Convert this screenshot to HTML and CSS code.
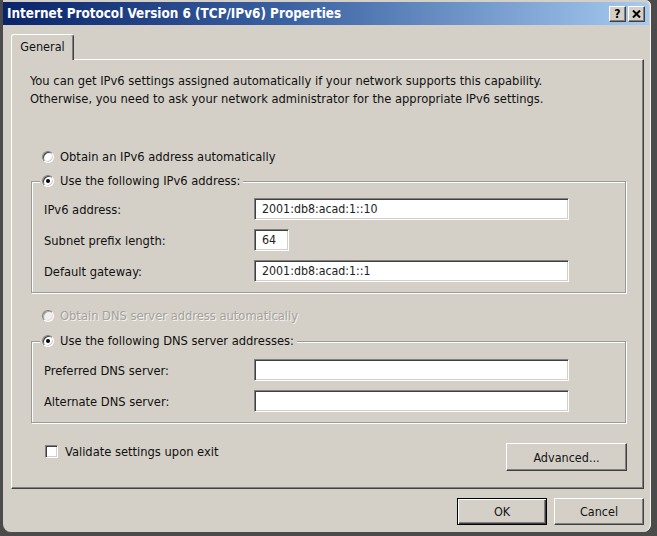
FILE: index.html
```html
<!DOCTYPE html>
<html>
<head>
<meta charset="utf-8">
<link rel="stylesheet" href="styles.css">
</head>
<body>
<div class="window">
  <div class="titlebar">
    <span class="title">Internet Protocol Version 6 (TCP/IPv6) Properties</span>
    <div class="caption-btns">
      <span class="cbtn">?</span>
      <span class="cbtn"><svg width="9" height="8" viewBox="0 0 9 8"><path d="M1 0.5 L8 7.5 M8 0.5 L1 7.5" stroke="#000" stroke-width="2"/></svg></span>
    </div>
  </div>
  <div class="client">
    <div class="tabs"><div class="tab">General</div></div>
    <div class="panel">
      <p class="intro">You can get IPv6 settings assigned automatically if your network supports this capability.<br>Otherwise, you need to ask your network administrator for the appropriate IPv6 settings.</p>
      <div class="radio-row first"><span class="radio"></span><span>Obtain an IPv6 address automatically</span></div>
      <fieldset class="group g1">
        <legend><span class="radio-row in-legend"><span class="radio checked"></span><span>Use the following IPv6 address:</span></span></legend>
        <div class="field"><span class="lbl">IPv6 address:</span><span class="input">2001:db8:acad:1::10</span></div>
        <div class="field"><span class="lbl">Subnet prefix length:</span><span class="input short">64</span></div>
        <div class="field"><span class="lbl">Default gateway:</span><span class="input">2001:db8:acad:1::1</span></div>
      </fieldset>
      <div class="radio-row disabled dns-auto"><span class="radio"></span><span>Obtain DNS server address automatically</span></div>
      <fieldset class="group g2">
        <legend><span class="radio-row in-legend"><span class="radio checked"></span><span>Use the following DNS server addresses:</span></span></legend>
        <div class="field"><span class="lbl">Preferred DNS server:</span><span class="input"></span></div>
        <div class="field"><span class="lbl">Alternate DNS server:</span><span class="input"></span></div>
      </fieldset>
      <div class="bottom-row">
        <div class="check-row"><span class="checkbox"></span><span>Validate settings upon exit</span></div>
        <button class="btn advanced">Advanced...</button>
      </div>
    </div>
    <div class="dialog-buttons">
      <button class="btn default">OK</button>
      <button class="btn">Cancel</button>
    </div>
  </div>
</div>
</body>
</html>
```
FILE: styles.css
```css
* { box-sizing: border-box; }
body {
  margin: 0;
  width: 657px;
  height: 536px;
  overflow: hidden;
  background: #4b4b4b;
  font-family: "DejaVu Sans Condensed", "Liberation Sans", sans-serif;
  font-size: 12.8px;
  color: #111;
}
.window {
  margin-left: 3px;
  width: 648px;
  height: 532px;
  background: #d4d0c8;
  border-radius: 0 6px 8px 8px;
  padding: 2px 2px 0 0;
  box-shadow: inset -1px 0 0 #f2f1ee;
}
.titlebar {
  height: 23px;
  display: flex;
  align-items: center;
  justify-content: space-between;
  padding: 0 4px 0 4px;
  background: linear-gradient(to right, #0a246a 0%, #3c63a3 45%, #a6caf0 100%);
  border-radius: 0 5px 0 0;
}
.title {
  color: #fff;
  font-weight: bold;
  font-size: 13.4px;
}
.caption-btns { display: flex; gap: 2px; }
.cbtn {
  width: 17px;
  height: 16px;
  display: flex;
  align-items: center;
  justify-content: center;
  background: #d4d0c8;
  border: 1px solid;
  border-color: #fff #404040 #404040 #fff;
  box-shadow: inset -1px -1px 0 #808080;
  font-weight: bold;
  font-size: 12px;
  color: #000;
  line-height: 1;
}
.client { padding: 9px 5px 0 8px; }
.tabs { display: flex; position: relative; z-index: 1; }
.tab {
  width: 63px;
  height: 26px;
  margin-bottom: -1px;
  display: flex;
  align-items: center;
  justify-content: center;
  padding-bottom: 2px;
  background: #d4d0c8;
  border: 1px solid;
  border-bottom: none;
  border-color: #fff #404040 transparent #fff;
  border-radius: 3px 3px 0 0;
  box-shadow: inset -1px 0 0 #808080;
  font-size: 12.5px;
}
.panel {
  width: 633px;
  height: 430px;
  border: 1px solid;
  border-color: #fff #404040 #404040 #fff;
  box-shadow: inset -1px -1px 0 #808080;
  padding: 12px 17px 0 19px;
}
.intro {
  margin: 0 0 0 -1px;
  line-height: 18px;
}
.radio-row {
  display: flex;
  align-items: center;
  gap: 6px;
  height: 16px;
  line-height: 16px;
}
.radio-row.first { margin: 41px 0 0 11px; }
.radio-row.dns-auto { margin: 15px 0 0 11px; }
.radio-row.disabled { color: #a5a29c; text-shadow: 1px 1px 0 #f4f3f1; }
.radio {
  width: 12px;
  height: 12px;
  flex: none;
  border-radius: 50%;
  background: #fff;
  border: 1px solid;
  border-color: #808080 #fff #fff #808080;
  box-shadow: inset 1px 1px 0 #404040, inset -1px -1px 0 #d4d0c8;
  position: relative;
}
.radio.checked::after {
  content: "";
  position: absolute;
  left: 3px;
  top: 3px;
  width: 4px;
  height: 4px;
  border-radius: 50%;
  background: #000;
}
.disabled .radio { background: #f0efec; box-shadow: inset 1px 1px 0 #a8a59f, inset -1px -1px 0 #e0ddd8; }
.group {
  margin: 8px 0 0 0;
  padding: 9px 0 10px 0;
  border: 1px solid #9d9a94;
  box-shadow: 1px 1px 0 #fff, inset 1px 1px 0 #fff;
  min-width: 0;
}
.group.g2 { margin-top: 9px; padding-top: 10px; }
.group legend {
  margin-left: 8px;
  padding: 0 3px 0 2px;
  background: #d4d0c8;
  line-height: 16px;
  height: 16px;
}
.field {
  display: flex;
  align-items: center;
  height: 22px;
  margin-left: 12px;
}
.field + .field { margin-top: 9px; }
.lbl { width: 210px; flex: none; }
.input {
  width: 315px;
  height: 22px;
  background: #fff;
  border: 1px solid;
  border-color: #808080 #fff #fff #808080;
  box-shadow: inset 1px 1px 0 #404040, inset -1px -1px 0 #d4d0c8;
  padding-left: 7px;
  display: flex;
  align-items: center;
  font-size: 12.3px;
  color: #222;
}
.input.short { width: 35px; }
.bottom-row {
  display: flex;
  justify-content: space-between;
  align-items: flex-start;
  margin-top: 20px;
}
.check-row {
  display: flex;
  align-items: center;
  gap: 7px;
  height: 16px;
  margin-left: 14px;
}
.checkbox {
  width: 13px;
  height: 13px;
  flex: none;
  background: #fff;
  border: 1px solid;
  border-color: #808080 #fff #fff #808080;
  box-shadow: inset 1px 1px 0 #404040, inset -1px -1px 0 #d4d0c8;
}
.btn {
  font-family: inherit;
  font-size: 12.5px;
  color: #151515;
  background: #d4d0c8;
  border: 1px solid;
  border-color: #fff #404040 #404040 #fff;
  box-shadow: inset -1px -1px 0 #808080;
  padding: 0;
  height: 27px;
  width: 90px;
}
.btn.advanced { width: 121px; height: 28px; margin-right: -1px; }
.btn.default {
  border: 1px solid #000;
  box-shadow: inset 1px 1px 0 #fff, inset -1px -1px 0 #404040, inset -2px -2px 0 #808080;
}
.dialog-buttons {
  display: flex;
  justify-content: flex-end;
  gap: 7px;
  margin-top: 9px;
}
```
